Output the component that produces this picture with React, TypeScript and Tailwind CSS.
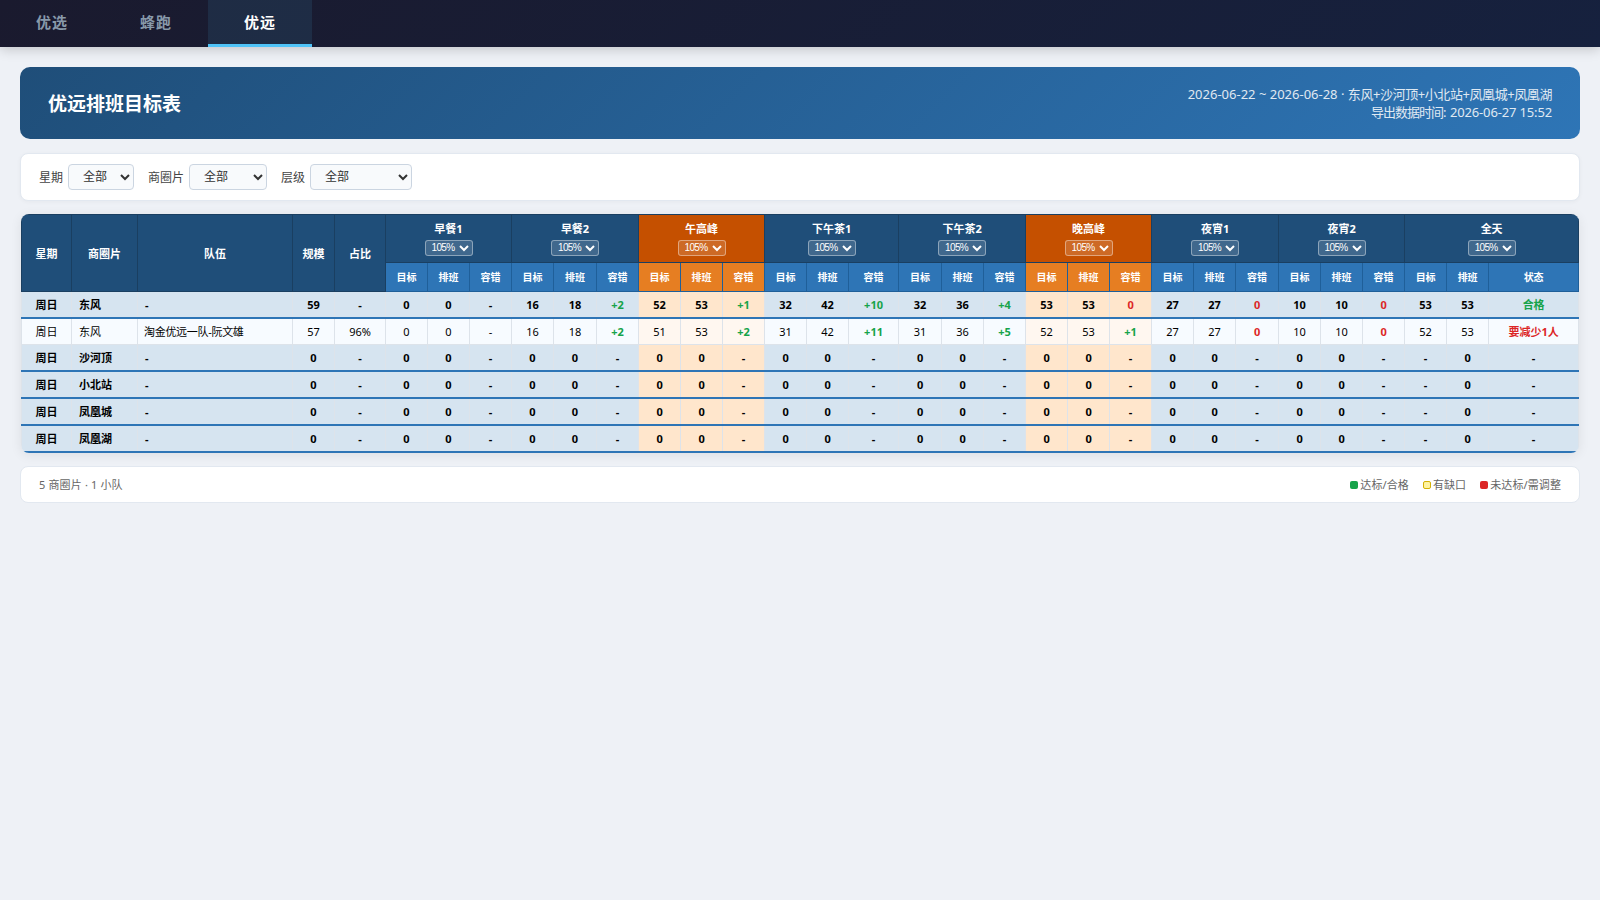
import type { ReactNode } from "react";

const tabs = ["优选", "蜂跑", "优远"];

const filters = [
  { label: "星期", cls: "w-[66px]" },
  { label: "商圈片", cls: "w-[78px]" },
  { label: "层级", cls: "w-[102px]" },
];

const periods = [
  { name: "早餐1", peak: false },
  { name: "早餐2", peak: false },
  { name: "午高峰", peak: true },
  { name: "下午茶1", peak: false },
  { name: "下午茶2", peak: false },
  { name: "晚高峰", peak: true },
  { name: "夜宵1", peak: false },
  { name: "夜宵2", peak: false },
  { name: "全天", peak: false },
];

const colWidths = [
  50, 66, 155, 42, 51,
  42, 42, 42, 42, 43, 42, 42, 42, 42, 42, 42, 50, 43, 42, 42,
  42, 42, 42, 42, 42, 43, 42, 42, 42, 42, 42, 90,
];

type Row = { area: string; team?: string; size: string; ratio: string; h: string; cells: string[] };

const empty = "0 0 - 0 0 - 0 0 - 0 0 - 0 0 - 0 0 - 0 0 - 0 0 - - 0 -".split(" ");

const rows: Row[] = [
  {
    area: "东风", size: "59", ratio: "-", h: "h-[26px]",
    cells: "0 0 - 16 18 +2 52 53 +1 32 42 +10 32 36 +4 53 53 0 27 27 0 10 10 0 53 53 合格".split(" "),
  },
  {
    area: "东风", team: "淘金优远一队-阮文雄", size: "57", ratio: "96%", h: "h-[27px]",
    cells: "0 0 - 16 18 +2 51 53 +2 31 42 +11 31 36 +5 52 53 +1 27 27 0 10 10 0 52 53 要减少1人".split(" "),
  },
  { area: "沙河顶", size: "0", ratio: "-", h: "h-[26px]", cells: empty },
  { area: "小北站", size: "0", ratio: "-", h: "h-[27px]", cells: empty },
  { area: "凤凰城", size: "0", ratio: "-", h: "h-[27px]", cells: empty },
  { area: "凤凰湖", size: "0", ratio: "-", h: "h-[27px]", cells: empty },
];

const legend = [
  { label: "达标/合格", cls: "bg-[#16a34a]" },
  { label: "有缺口", cls: "bg-[#fef3a0] border border-[#d4b106]" },
  { label: "未达标/需调整", cls: "bg-[#dc2626]" },
];

const isPeak = (i: number) => periods[Math.floor(i / 3)].peak;

// third column of each period is the tolerance, the last one is the status
function tone(value: string, i: number) {
  if (i % 3 !== 2 || value === "-") return "";
  if (value.startsWith("+") || value === "合格") return "font-bold text-[#16a34a]";
  return "font-bold text-[#dc2626]";
}

function FixedTh({ children }: { children: ReactNode }) {
  return (
    <th rowSpan={2} className="border border-[#1a3f61] bg-[#1f4e79] p-0 align-middle font-bold">
      {children}
    </th>
  );
}

function ScheduleTable() {
  return (
    <table className="w-[1558px] table-fixed border-collapse text-center text-[11px] leading-[15px]">
      <colgroup>
        {colWidths.map((w, i) => (
          <col key={i} style={{ width: w }} />
        ))}
      </colgroup>
      <thead className="text-white">
        <tr className="h-[48px]">
          <FixedTh>星期</FixedTh>
          <FixedTh>商圈片</FixedTh>
          <FixedTh>队伍</FixedTh>
          <FixedTh>规模</FixedTh>
          <FixedTh>占比</FixedTh>
          {periods.map((p) => (
            <th
              key={p.name}
              colSpan={3}
              className={`border border-[#1a3f61] p-0 align-middle font-bold ${p.peak ? "bg-[#c55000]" : "bg-[#1f4e79]"}`}
            >
              <div className="flex flex-col items-center gap-1 pb-px">
                <span>{p.name}</span>
                <select className="h-4 w-12 rounded-[3px] border border-white/40 bg-white/15 pl-0.5 font-['Liberation_Sans'] text-[10px] font-normal leading-3 tracking-[-0.65px] text-white">
                  <option>105%</option>
                </select>
              </div>
            </th>
          ))}
        </tr>
        <tr className="h-[29px] text-[10px]">
          {empty.map((_, i) => (
            <th
              key={i}
              className={`border border-[#1f5f99] p-0 font-bold ${isPeak(i) ? "bg-[#e67e22]" : "bg-[#2e75b6]"}`}
            >
              {i === 26 ? "状态" : ["目标", "排班", "容错"][i % 3]}
            </th>
          ))}
        </tr>
      </thead>
      <tbody className="text-black">
        {rows.map((r, n) => {
          const team = Boolean(r.team);
          const cell = team
            ? "border border-[#dde3ea] p-0"
            : "border border-[#dde3ea] border-b-2 border-b-[#2e75b6] p-0 font-bold";
          const base = team ? "bg-[#f7fbff]" : "bg-[#d6e4f0]";
          const peak = team ? "bg-[#fff7f0]" : "bg-[#ffe6cc]";
          return (
            <tr key={n} className={r.h}>
              <td className={`${cell} ${base}`}>周日</td>
              <td className={`${cell} ${base}`}>
                <div className="pl-[7px] text-left">{r.area}</div>
              </td>
              <td className={`${cell} ${base}`}>
                <div className={`text-left ${team ? "pl-1.5 tracking-[-0.3px]" : "pl-[7px]"}`}>{r.team ?? "-"}</div>
              </td>
              <td className={`${cell} ${base}`}>{r.size}</td>
              <td className={`${cell} ${base}`}>{r.ratio}</td>
              {r.cells.map((c, i) => (
                <td key={i} className={`${cell} ${isPeak(i) ? peak : base} ${tone(c, i)}`}>
                  {c}
                </td>
              ))}
            </tr>
          );
        })}
      </tbody>
    </table>
  );
}

export default function App() {
  return (
    <div className="min-h-screen bg-[#eef1f6] font-['Noto_Sans','Noto_Sans_CJK_SC',sans-serif]">
      <nav className="flex h-[47px] bg-[linear-gradient(135deg,#1a1a2e,#16213e)] shadow-[0_2px_12px_rgba(0,0,0,0.2)]">
        {tabs.map((t, i) => (
          <button
            key={t}
            className={`w-[104px] border-b-[3px] text-[15px] font-bold leading-5 tracking-[1px] ${
              i === 2 ? "border-[#4fc3f7] bg-[#4fc3f7]/10 text-white" : "border-transparent text-[#8899aa]"
            }`}
          >
            {t}
          </button>
        ))}
      </nav>

      <main className="p-5">
        <header className="flex h-[72px] items-center justify-between rounded-[10px] bg-[linear-gradient(135deg,#1f4e79,#2e75b6)] px-7 text-white">
          <h1 className="pt-0.5 text-[19px] font-bold leading-6">优远排班目标表</h1>
          <div className="text-right text-[13px] leading-[18px] opacity-85">
            <div>
              2026-06-22 ~ 2026-06-28 · <span className="tracking-[-0.42px]">东风+沙河顶+小北站+凤凰城+凤凰湖</span>
            </div>
            <div>
              <span className="tracking-[-1px]">导出数据时间</span>: <span className="tracking-[-0.15px]">2026-06-27 15:52</span>
            </div>
          </div>
        </header>

        <section className="mt-3.5 flex h-12 items-center gap-3.5 rounded-lg border border-[#e2e8f0] bg-white px-[18px] text-xs text-[#444] shadow-[0_1px_4px_rgba(0,0,0,0.04)]">
          {filters.map((f) => (
            <label key={f.label} className="flex items-center gap-[5px]">
              <span className="pt-px">{f.label}</span>
              <select
                className={`h-[26px] rounded border border-[#cbd5e1] bg-[#f8fafc] pb-0.5 pl-2.5 text-xs text-[#333] ${f.cls}`}
              >
                <option>全部</option>
              </select>
            </label>
          ))}
        </section>

        <section className="mx-px mt-[13px] overflow-hidden rounded-lg shadow-[0_2px_12px_rgba(0,0,0,0.08)]">
          <ScheduleTable />
        </section>

        <footer className="mt-[13px] flex h-[37px] items-center justify-between rounded-lg border border-[#e2e8f0] bg-white px-[18px] pt-0.5 text-[11px] text-[#666]">
          <span className="tracking-[0.15px]">5 商圈片 · 1 小队</span>
          <div className="flex gap-3.5">
            {legend.map((l) => (
              <span key={l.label} className="flex items-center gap-0.5">
                <i className={`size-2 rounded-xs ${l.cls}`} />
                <span className="tracking-[0.1px]">{l.label}</span>
              </span>
            ))}
          </div>
        </footer>
      </main>
    </div>
  );
}
